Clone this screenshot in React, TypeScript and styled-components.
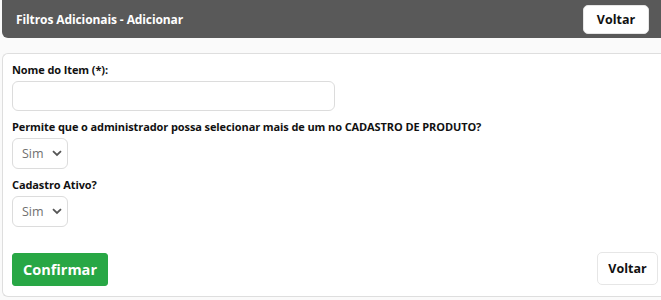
import styled, { createGlobalStyle } from "styled-components";

const GlobalStyle = createGlobalStyle`
  html, body {
    margin: 0;
    padding: 0;
    overflow: hidden;
    background: #fafafa;
    font-family: "Open Sans", "Liberation Sans", sans-serif;
  }
`;

const Page = styled.div`
  width: 670px;
  margin-left: 2px;
  display: flex;
  flex-direction: column;
  gap: 15px;
`;

const Header = styled.div`
  height: 38px;
  box-sizing: border-box;
  background: #595959;
  border-radius: 0 0 0 6px;
  display: flex;
  align-items: center;
  justify-content: space-between;
  padding: 0 23px 0 14px;
`;

const Title = styled.h1`
  margin: 0;
  font-size: 12px;
  font-weight: 700;
  color: #fff;
  letter-spacing: -0.1px;
`;

const Button = styled.button<{ $variant?: "light" | "success" }>`
  font-family: inherit;
  font-weight: 700;
  cursor: pointer;
  border-radius: ${(p) => (p.$variant === "success" ? "3px" : "5px")};
  border: 1px solid ${(p) => (p.$variant === "success" ? "#28a745" : "#e6e6e6")};
  background: ${(p) => (p.$variant === "success" ? "#28a745" : "#fff")};
  color: ${(p) => (p.$variant === "success" ? "#fff" : "#111")};
  font-size: ${(p) => (p.$variant === "success" ? "14.5px" : "12.5px")};
  padding: 0;
`;

const HeaderButton = styled(Button)`
  width: 66px;
  height: 29px;
  margin-top: 1px;
`;

const Card = styled.form`
  background: #fff;
  border: 1px solid #dedede;
  border-right: none;
  border-radius: 6px 0 0 6px;
  padding: 7px 14px 10px 9px;
  display: flex;
  flex-direction: column;
`;

const Field = styled.div`
  display: flex;
  flex-direction: column;
  gap: 3px;
  margin-bottom: 7px;
`;

const Label = styled.label`
  font-size: 11px;
  font-weight: 700;
  letter-spacing: -0.1px;
  color: #111;
  line-height: 17px;
`;

const TextInput = styled.input`
  width: 323px;
  height: 30px;
  box-sizing: border-box;
  border: 1px solid #dcdcdc;
  border-radius: 6px;
  padding: 0 8px;
  font-family: inherit;
  font-size: 13px;
  outline: none;
`;

const SelectWrap = styled.div`
  position: relative;
  width: 56px;
  height: 31px;
`;

const Select = styled.select`
  appearance: none;
  width: 100%;
  height: 100%;
  box-sizing: border-box;
  border: 1px solid #dcdcdc;
  border-radius: 6px;
  background: #fff;
  padding: 0 0 0 9px;
  font-family: inherit;
  font-size: 12.5px;
  color: #707070;
  outline: none;
`;

const Chevron = styled.svg`
  position: absolute;
  right: 6px;
  top: 12px;
  pointer-events: none;
`;

const Actions = styled.div`
  display: flex;
  justify-content: space-between;
  align-items: flex-start;
  margin-top: 18px;
`;

const ConfirmButton = styled(Button)`
  width: 96px;
  height: 33px;
  margin-top: 1px;
`;

const BackButton = styled(Button)`
  width: 61px;
  height: 33px;
`;

function YesNoSelect() {
  return (
    <SelectWrap>
      <Select defaultValue="sim">
        <option value="sim">Sim</option>
        <option value="nao">Não</option>
      </Select>
      <Chevron width="10" height="7" viewBox="0 0 10 7">
        <path d="M1 1.2 L5 5 L9 1.2" fill="none" stroke="#555" strokeWidth="1.8" />
      </Chevron>
    </SelectWrap>
  );
}

export default function App() {
  return (
    <>
      <GlobalStyle />
      <Page>
        <Header>
          <Title>Filtros Adicionais - Adicionar</Title>
          <HeaderButton type="button">Voltar</HeaderButton>
        </Header>
        <Card onSubmit={(e) => e.preventDefault()}>
          <Field>
            <Label>Nome do Item (*):</Label>
            <TextInput type="text" />
          </Field>
          <Field>
            <Label>Permite que o administrador possa selecionar mais de um no CADASTRO DE PRODUTO?</Label>
            <YesNoSelect />
          </Field>
          <Field>
            <Label>Cadastro Ativo?</Label>
            <YesNoSelect />
          </Field>
          <Actions>
            <ConfirmButton type="submit" $variant="success">
              Confirmar
            </ConfirmButton>
            <BackButton type="button">Voltar</BackButton>
          </Actions>
        </Card>
      </Page>
    </>
  );
}
